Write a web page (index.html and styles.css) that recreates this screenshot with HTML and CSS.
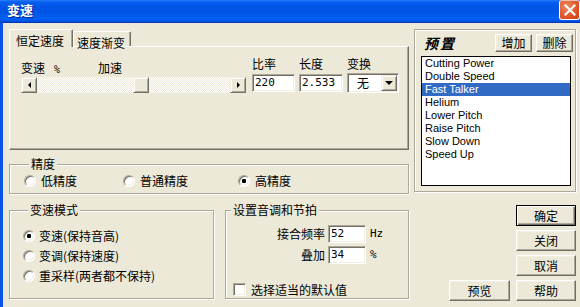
FILE: index.html
```html
<!DOCTYPE html>
<html lang="zh-CN">
<head>
<meta charset="utf-8">
<title>变速</title>
<link rel="stylesheet" href="styles.css">
</head>
<body>
<div class="window">
  <div class="titlebar">
    <span class="title">变速</span>
    <span class="close"><svg width="12" height="12" viewBox="0 0 12 12"><path d="M1.5 1.5 L10.5 10.5 M10.5 1.5 L1.5 10.5" stroke="#fff" stroke-width="2.2" stroke-linecap="square"/></svg></span>
  </div>
  <div class="client">
    <div class="left">
      <div class="tabs">
        <div class="tab active">恒定速度</div>
        <div class="tab second">速度渐变</div>
      </div>
      <div class="panel">
        <div class="speed">
          <div class="speed-labels"><span class="lbl-speed">变速<span class="pct">%</span></span><span>加速</span></div>
          <div class="scrollbar">
            <span class="sb-btn"><span class="arrow-left"></span></span>
            <span class="sb-track"><span class="sb-thumb"></span></span>
            <span class="sb-btn"><span class="arrow-right"></span></span>
          </div>
        </div>
        <div class="field f-ratio"><span class="flabel">比率</span><span class="input num">220</span></div>
        <div class="field f-len"><span class="flabel">长度</span><span class="input num">2.533</span></div>
        <div class="field f-conv"><span class="flabel">变换</span><span class="combo"><span class="combo-text">无</span><span class="combo-btn"><span class="arrow-down"></span></span></span></div>
      </div>
      <div class="group precision">
        <div class="group-title">精度</div>
        <div class="prec-row">
          <span class="opt"><span class="radio"></span>低精度</span>
          <span class="opt"><span class="radio"></span>普通精度</span>
          <span class="opt"><span class="radio checked"></span>高精度</span>
        </div>
      </div>
      <div class="bottom-row">
        <div class="group mode">
          <div class="group-title">变速模式</div>
          <div class="mode-list">
            <span class="opt"><span class="radio checked"></span>变速(保持音高)</span>
            <span class="opt"><span class="radio"></span>变调(保持速度)</span>
            <span class="opt"><span class="radio"></span>重采样(两者都不保持)</span>
          </div>
        </div>
        <div class="group pitch">
          <div class="group-title">设置音调和节拍</div>
          <div class="pitch-grid">
            <span class="plabel">接合频率</span><span class="input num">52</span><span class="unit">Hz</span>
            <span class="plabel">叠加</span><span class="input num">34</span><span class="unit">%</span>
          </div>
          <div class="check-row"><span class="checkbox"></span>选择适当的默认值</div>
        </div>
      </div>
    </div>
    <div class="right">
      <div class="preset">
        <div class="preset-head">
          <span class="preset-title">预置</span>
          <span class="btn small">增加</span>
          <span class="btn small">删除</span>
        </div>
        <ul class="list">
          <li>Cutting Power</li>
          <li>Double Speed</li>
          <li class="selected">Fast Talker</li>
          <li>Helium</li>
          <li>Lower Pitch</li>
          <li>Raise Pitch</li>
          <li>Slow Down</li>
          <li>Speed Up</li>
        </ul>
      </div>
      <div class="buttons">
        <span class="btn default">确定</span>
        <span class="btn">关闭</span>
        <span class="btn">取消</span>
        <div class="btn-row">
          <span class="btn preview">预览</span>
          <span class="btn">帮助</span>
        </div>
      </div>
    </div>
  </div>
</div>
</body>
</html>
```

FILE: styles.css
```css
* { box-sizing: border-box; }
html, body { margin: 0; padding: 0; }
body {
  width: 580px;
  height: 307px;
  overflow: hidden;
  background: #ECE9D8;
  font-family: "Noto Sans CJK SC", sans-serif;
  font-size: 12px;
  line-height: 14px;
  color: #000;
}
.window {
  width: 580px;
  height: 307px;
  display: flex;
  flex-direction: column;
  background: #ECE9D8;
}

/* title bar */
.titlebar {
  height: 23px;
  flex: none;
  display: flex;
  justify-content: space-between;
  align-items: flex-start;
  padding-left: 7px;
  background: linear-gradient(to bottom, #2A7BFA 0px, #0660F0 2px, #0055E8 6px, #0053E3 12px, #0060F2 18px, #0058EC 21px, #0040C8 22px, #0033B0 23px);
}
.title {
  color: #fff;
  font-weight: bold;
  font-size: 13px;
  line-height: 14px;
  margin-top: 3px;
  text-shadow: 1px 1px 0 #0A2090;
}
.close {
  width: 21px;
  height: 20px;
  margin-right: 0;
  border: 1px solid #fff;
  border-top-color: #F3C4B0;
  border-radius: 3px;
  background: radial-gradient(circle at 35% 30%, #F08A60 0%, #E2572B 55%, #C83F14 100%);
  display: flex;
  align-items: center;
  justify-content: center;
}

/* client area */
.client {
  flex: 1;
  display: grid;
  grid-template-columns: 400px 162px;
  column-gap: 5px;
  align-items: start;
  padding: 6px 0 0 6px;
  border-left: 3px solid #0A55E6;
}

/* tabs */
.tabs {
  display: flex;
  align-items: flex-end;
  height: 17px;
}
.tab {
  height: 15px;
  width: 58px;
  padding: 4px 0 0 3px;
  border: 1px solid;
  border-bottom: none;
  border-color: #fff #716F64 #716F64 #fff;
  box-shadow: inset -1px 0 #ACA899;
  border-radius: 2px 2px 0 0;
  background: #ECE9D8;
  white-space: nowrap;
}
.tab.active {
  position: relative;
  z-index: 1;
  width: 64px;
  height: 18px;
  margin-bottom: -1px;
  padding: 4px 0 0 6px;
}
.panel {
  height: 104px;
  display: flex;
  align-items: flex-start;
  padding: 10px 0 0 11px;
  border: 1px solid;
  border-color: #fff #716F64 #716F64 #fff;
  box-shadow: inset -1px -1px #ACA899;
}
.speed {
  width: 225px;
  margin-top: 4px;
}
.speed-labels { display: flex; height: 14px; }
.lbl-speed { width: 77px; white-space: nowrap; }
.pct {
  font-family: "DejaVu Sans Mono", monospace;
  font-size: 10px;
  margin-left: 9px;
}
.scrollbar {
  display: flex;
  height: 16px;
  margin-top: 2px;
}
.sb-btn, .sb-thumb {
  width: 16px;
  height: 16px;
  flex: none;
  display: flex;
  align-items: center;
  justify-content: center;
  background: #ECE9D8;
  border: 1px solid;
  border-color: #F1EFE2 #716F64 #716F64 #F1EFE2;
  box-shadow: inset 1px 1px #fff, inset -1px -1px #ACA899;
}
.sb-track {
  flex: 1;
  display: flex;
  background-color: #fff;
  background-image: conic-gradient(#ECE9D8 25%, #fff 0 50%, #ECE9D8 0 75%, #fff 0);
  background-size: 2px 2px;
}
.sb-thumb { margin-left: 96px; }
.arrow-left {
  width: 0; height: 0;
  border-top: 3px solid transparent;
  border-bottom: 3px solid transparent;
  border-right: 3px solid #000;
}
.arrow-right {
  width: 0; height: 0;
  border-top: 3px solid transparent;
  border-bottom: 3px solid transparent;
  border-left: 3px solid #000;
}
.arrow-down {
  width: 0; height: 0;
  border-left: 4px solid transparent;
  border-right: 4px solid transparent;
  border-top: 4px solid #000;
}

.field {
  display: flex;
  flex-direction: column;
}
.flabel { height: 14px; margin-bottom: 3px; padding-left: 0; }
.f-ratio { margin-left: 6px; width: 43px; }
.f-len { margin-left: 4px; width: 44px; }
.f-conv { margin-left: 4px; width: 52px; }
.f-conv .flabel { margin-bottom: 2px; }

.input {
  display: block;
  height: 18px;
  background: #fff;
  border: 1px solid;
  border-color: #ACA899 #fff #fff #ACA899;
  box-shadow: inset 1px 1px #716F64, inset -1px -1px #F1EFE2;
  padding: 0 0 0 2px;
  white-space: nowrap;
}
.num {
  font-family: "DejaVu Sans Mono", monospace;
  font-size: 11px;
  line-height: 16px;
}
.combo {
  display: flex;
  align-items: center;
  height: 20px;
  background: #fff;
  border: 1px solid;
  border-color: #ACA899 #fff #fff #ACA899;
  box-shadow: inset 1px 1px #716F64, inset -1px -1px #F1EFE2;
  padding: 1px;
}
.combo-text { flex: 1; padding-left: 8px; }
.combo-btn {
  width: 16px;
  height: 16px;
  display: flex;
  align-items: center;
  justify-content: center;
  background: #ECE9D8;
  border: 1px solid;
  border-color: #F1EFE2 #716F64 #716F64 #F1EFE2;
  box-shadow: inset 1px 1px #fff, inset -1px -1px #ACA899;
}

/* group boxes */
.group {
  border: 1px solid #ACA899;
  box-shadow: inset 1px 1px #fff, 1px 1px #fff;
}
.group-title {
  width: fit-content;
  margin: -8px 0 0 5px;
  padding: 0 2px;
  background: #ECE9D8;
  white-space: nowrap;
}
.precision {
  margin-top: 14px;
  padding: 0 0 5px 14px;
}
.prec-row {
  display: grid;
  grid-template-columns: 99px 115px auto;
  margin-top: 3px;
  height: 14px;
}
.opt {
  display: flex;
  align-items: center;
  gap: 5px;
  white-space: nowrap;
}
.radio {
  position: relative;
  width: 12px;
  height: 12px;
  flex: none;
  border-radius: 50%;
  background: #fff;
  border: 1px solid;
  border-color: #ACA899 #fff #fff #ACA899;
  box-shadow: inset 1px 1px #716F64, inset -1px -1px #F1EFE2;
}
.radio.checked::after {
  content: "";
  position: absolute;
  left: 3px;
  top: 3px;
  width: 4px;
  height: 4px;
  border-radius: 1px;
  background: #000;
}
.bottom-row {
  display: flex;
  gap: 11px;
  margin-top: 16px;
}
.mode {
  width: 205px;
  padding: 0 0 12px 13px;
}
.mode-list {
  display: flex;
  flex-direction: column;
  margin-top: 9px;
}
.mode-list .opt { height: 20px; gap: 4px; }
.pitch {
  width: 184px;
  padding: 0 0 1px 0;
}
.pitch-grid {
  display: grid;
  grid-template-columns: 99px 38px auto;
  column-gap: 3px;
  row-gap: 3px;
  margin-top: 8px;
  align-items: center;
}
.plabel { text-align: right; }
.unit {
  font-family: "DejaVu Sans Mono", monospace;
  font-size: 11px;
  margin-left: 1px;
}
.check-row {
  display: flex;
  align-items: center;
  gap: 5px;
  height: 15px;
  margin-top: 18px;
  padding-left: 7px;
}
.checkbox {
  width: 13px;
  height: 13px;
  flex: none;
  background: #fff;
  border: 1px solid;
  border-color: #ACA899 #fff #fff #ACA899;
  box-shadow: inset 1px 1px #716F64, inset -1px -1px #F1EFE2;
}

/* right column */
.preset {
  height: 163px;
  border: 1px solid #ACA899;
  box-shadow: inset 1px 1px #fff, 1px 1px #fff;
  padding: 4px 2px 0 6px;
}
.preset-head {
  display: flex;
  align-items: center;
  gap: 4px;
  height: 17px;
}
.preset-title {
  flex: 1;
  padding-left: 3px;
  font-weight: bold;
  font-style: italic;
  font-size: 14px;
  letter-spacing: 2px;
}
.btn {
  display: flex;
  align-items: center;
  justify-content: center;
  height: 21px;
  width: 60px;
  background: #ECE9D8;
  border: 1px solid;
  border-color: #fff #716F64 #716F64 #fff;
  box-shadow: inset -1px -1px #ACA899, inset 1px 1px #F1EFE2;
  white-space: nowrap;
}
.btn.small { width: 37px; height: 18px; }
.btn.default {
  border-color: #000;
  box-shadow: inset 1px 1px #fff, inset -1px -1px #716F64, inset -2px -2px #ACA899;
}
.list {
  list-style: none;
  margin: 5px 0 0 0;
  padding: 0;
  width: 150px;
  height: 130px;
  background: #fff;
  border: 1px solid #000;
  font-family: "Liberation Sans", sans-serif;
  font-size: 11px;
  line-height: 13px;
}
.list li { padding-left: 3px; white-space: nowrap; }
.list li.selected { background: #316AC5; color: #fff; }
.buttons {
  display: flex;
  flex-direction: column;
  align-items: flex-end;
  gap: 4px;
  margin-top: 13px;
}
.btn-row { display: flex; gap: 6px; }
.btn.preview { width: 61px; }
```
